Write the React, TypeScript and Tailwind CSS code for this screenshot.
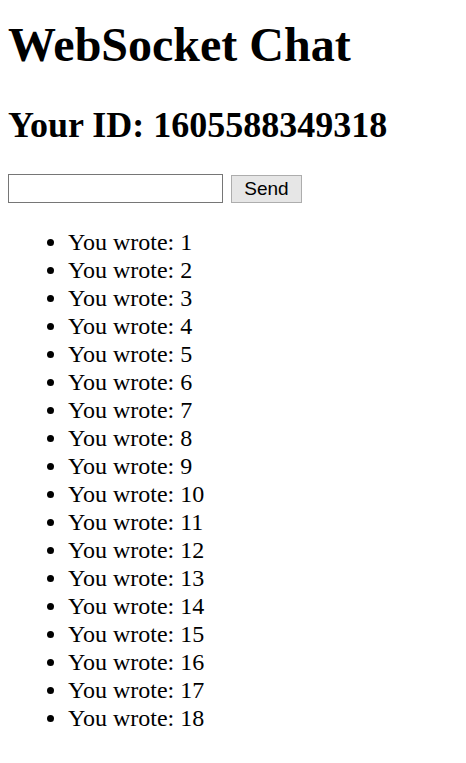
const messages = Array.from({ length: 18 }, (_, i) => i + 1);

export default function App() {
    return (
        <div className="bg-white text-black min-h-[763px] px-2 font-['Liberation_Serif',serif]">
            <h1 className="pt-[17px] text-[48px] leading-[55px] font-bold">WebSocket Chat</h1>

            <h2 className="mt-[33px] text-[36px] leading-[41px] font-bold">Your ID: 1605588349318</h2>

            <form className="mt-[28px] flex items-center gap-2" onSubmit={(e) => e.preventDefault()}>
                <input
                    type="text"
                    className="w-[215px] h-[29px] border border-[#767676] bg-white px-1 outline-none"
                />
                <button
                    type="submit"
                    className="w-[71px] h-[28px] border border-[#adadad] bg-[#e6e6e6] text-[19px] leading-none text-black font-['Liberation_Sans',sans-serif]"
                >
                    Send
                </button>
            </form>

            <ul className="mt-[25px] list-disc pl-[60px] text-[24px] leading-[28px]">
                {messages.map((n) => (
                    <li key={n}>You wrote: {n}</li>
                ))}
            </ul>
        </div>
    );
}
